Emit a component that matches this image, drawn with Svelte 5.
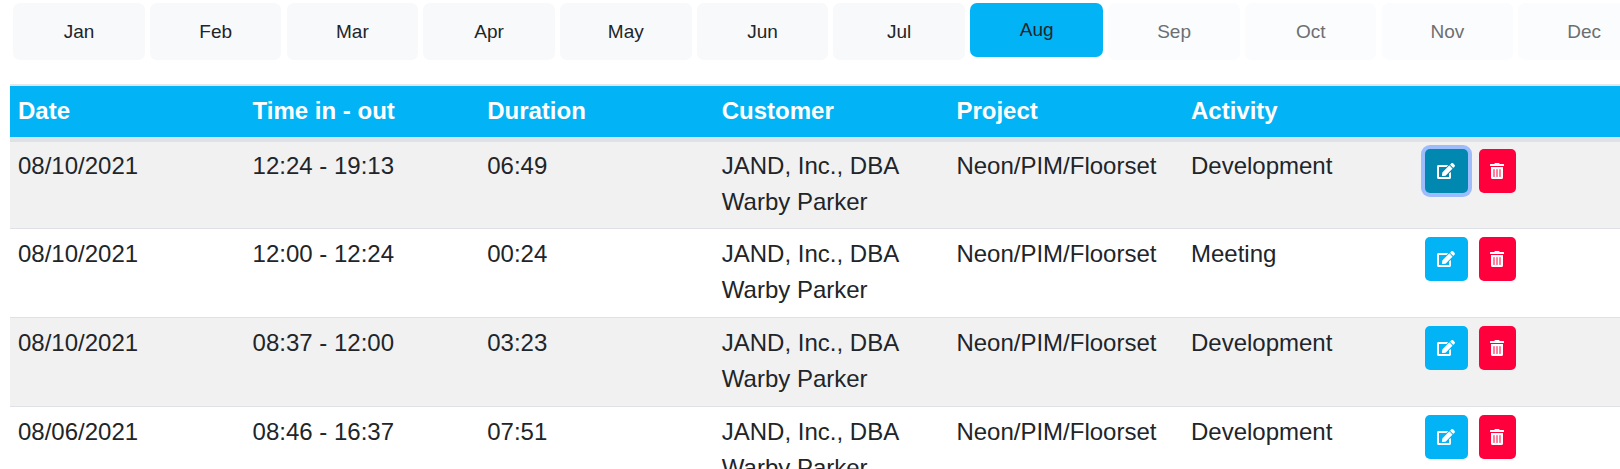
<script>
	const months = ['Jan', 'Feb', 'Mar', 'Apr', 'May', 'Jun', 'Jul', 'Aug', 'Sep', 'Oct', 'Nov', 'Dec'];
	const activeMonth = 7;
	const columns = ['Date', 'Time in - out', 'Duration', 'Customer', 'Project', 'Activity', ''];
	const customer = 'JAND, Inc., DBA Warby Parker';
	const project = 'Neon/PIM/Floorset';

	const rows = [
		{ date: '08/10/2021', time: '12:24 - 19:13', duration: '06:49', activity: 'Development', focused: true },
		{ date: '08/10/2021', time: '12:00 - 12:24', duration: '00:24', activity: 'Meeting' },
		{ date: '08/10/2021', time: '08:37 - 12:00', duration: '03:23', activity: 'Development' },
		{ date: '08/06/2021', time: '08:46 - 16:37', duration: '07:51', activity: 'Development' }
	];
</script>

<div class="page">
	<div class="months">
		{#each months as month, i}
			<button class="month" class:active={i === activeMonth} class:disabled={i > activeMonth}>{month}</button>
		{/each}
	</div>

	<table>
		<thead>
			<tr>
				{#each columns as col}
					<th>{col}</th>
				{/each}
			</tr>
		</thead>
		<tbody>
			{#each rows as row}
				<tr>
					<td>{row.date}</td>
					<td>{row.time}</td>
					<td>{row.duration}</td>
					<td>{customer}</td>
					<td>{project}</td>
					<td>{row.activity}</td>
					<td class="actions">
						<div class="buttons">
							<button class="icon-btn edit" class:focused={row.focused} aria-label="Edit">
								<svg viewBox="0 0 576 512" width="18" height="16">
									<path fill="currentColor" d="M402.6 83.2l90.2 90.2c3.8 3.8 3.8 10 0 13.8L274.4 405.6l-92.8 10.3c-12.4 1.4-22.9-9.1-21.5-21.5l10.3-92.8L388.8 83.2c3.8-3.8 10-3.8 13.8 0zm162-22.9l-48.8-48.8c-15.2-15.2-39.9-15.2-55.2 0l-35.4 35.4c-3.8 3.8-3.8 10 0 13.8l90.2 90.2c3.8 3.8 10 3.8 13.8 0l35.4-35.4c15.2-15.3 15.2-40 0-55.2zM384 346.2V448H64V128h229.8c3.2 0 6.2-1.3 8.5-3.5l40-40c7.6-7.6 2.2-20.5-8.5-20.5H48C21.5 64 0 85.5 0 112v352c0 26.5 21.5 48 48 48h352c26.5 0 48-21.5 48-48V306.2c0-10.7-12.9-16-20.5-8.5l-40 40c-2.2 2.3-3.5 5.3-3.5 8.5z" />
								</svg>
							</button>
							<button class="icon-btn remove" aria-label="Delete">
								<svg viewBox="0 0 448 512" width="14" height="16">
									<path fill="currentColor" d="M32 464a48 48 0 0 0 48 48h288a48 48 0 0 0 48-48V128H32zm272-256a16 16 0 0 1 32 0v224a16 16 0 0 1-32 0zm-96 0a16 16 0 0 1 32 0v224a16 16 0 0 1-32 0zm-96 0a16 16 0 0 1 32 0v224a16 16 0 0 1-32 0zM432 32H312l-9.4-18.7A24 24 0 0 0 281.1 0H166.8a23.72 23.72 0 0 0-21.4 13.3L136 32H16A16 16 0 0 0 0 48v32a16 16 0 0 0 16 16h416a16 16 0 0 0 16-16V48a16 16 0 0 0-16-16z" />
								</svg>
							</button>
						</div>
					</td>
				</tr>
			{/each}
		</tbody>
	</table>
</div>

<style>
	:global(body) {
		margin: 0;
		background: #fff;
		overflow: hidden;
	}

	.page {
		width: 1620px;
		height: 469px;
		overflow: hidden;
		font-family: 'Liberation Sans', Arial, sans-serif;
		color: #212529;
	}

	.months {
		display: flex;
		gap: 5.2px;
		padding: 3px 0 0 13.3px;
		height: 57px;
		align-items: flex-start;
	}

	.month {
		flex: 0 0 131.5px;
		height: 57px;
		padding: 0;
		border: 0;
		border-radius: 7px;
		background: #f8f9fa;
		color: #212529;
		font-family: inherit;
		font-size: 19px;
	}

	.month.active {
		flex-basis: 133px;
		height: 54px;
		background: #02b4f5;
	}

	.month.disabled {
		background: #fbfcfd;
		color: #6c6f72;
	}

	table {
		margin: 24px 0 0 10px;
		width: 1610px;
		table-layout: fixed;
		border-collapse: separate;
		border-spacing: 0;
		font-size: 24px;
		line-height: 36px;
	}

	th {
		width: 234.6px;
		height: 58px;
		padding: 0 8px 2px;
		box-sizing: border-box;
		background: #02b4f5;
		color: #fff;
		font-weight: 700;
		text-align: left;
		border-top: 2px solid #e4e6e9;
		border-bottom: 5px solid #dee2e6;
	}

	td {
		padding: 7px 8px 9px;
		vertical-align: top;
		border-bottom: 1px solid #dee2e6;
	}

	tbody tr:first-child td {
		padding-top: 6px;
		padding-bottom: 8px;
	}

	tbody tr:nth-child(odd) {
		background: #f1f1f2;
	}

	td.actions {
		padding-top: 8px;
		padding-left: 7px;
	}

	tbody tr:first-child td.actions {
		padding-top: 7px;
	}

	.buttons {
		display: flex;
		gap: 11px;
	}

	.icon-btn {
		display: flex;
		align-items: center;
		justify-content: center;
		height: 44px;
		padding: 0;
		border: 0;
		border-radius: 5px;
		color: #fff;
	}

	.edit {
		width: 43px;
		background: #02b4f5;
	}

	.edit.focused {
		background: #0088b0;
		box-shadow: 0 0 0 4px #9cbcfc;
	}

	.remove {
		width: 37.5px;
		background: #ff003c;
	}
</style>
